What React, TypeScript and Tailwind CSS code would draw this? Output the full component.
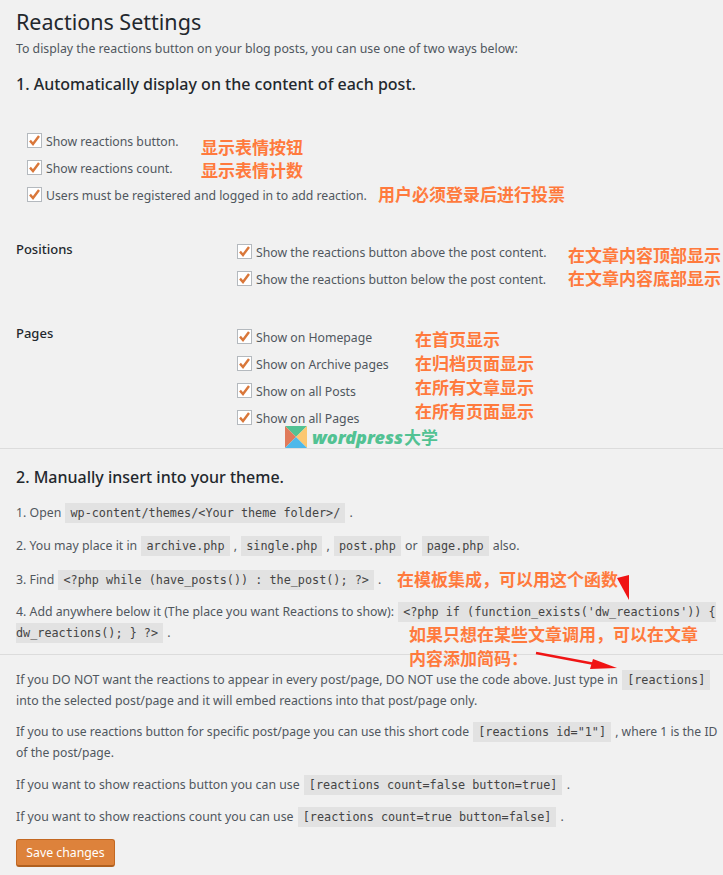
const SANS = "font-['Noto_Sans','Noto_Sans_CJK_SC',sans-serif]";

function CheckRow({ label }: { label: string }) {
  return (
    <label className="flex items-center h-[27px] text-[12.25px] text-[#50575e]">
      <span className="w-[15px] h-[15px] mr-1 border border-[#b4b9be] bg-white flex items-center justify-center shrink-0">
        <svg width="13" height="13" viewBox="0 0 13 13">
          <path d="M2 6.6 L5 10 L11 2" fill="none" stroke="#d9773a" strokeWidth="2.4" />
        </svg>
      </span>
      <span className="pt-[3px]">{label}</span>
    </label>
  );
}

function Code({ children }: { children: React.ReactNode }) {
  return (
    <code className="bg-[#e2e2e2] px-[5px] py-[3px] mx-[1px] font-['DejaVu_Sans_Mono',monospace] text-[11.8px] leading-none text-[#444]">
      {children}
    </code>
  );
}

function Note({ className, children }: { className: string; children: React.ReactNode }) {
  return (
    <div className={`absolute font-['Noto_Sans_CJK_SC',sans-serif] font-bold text-[#ff7a3d] text-[17px] leading-[24px] whitespace-nowrap ${className}`}>
      {children}
    </div>
  );
}

export default function App() {
  return (
    <div className={`relative w-[723px] h-[875px] overflow-hidden bg-[#f1f1f1] ${SANS}`}>
      <div className="pl-4 pr-[2px] text-[12.3px] text-[#50575e]">
        <h1 className="pt-[7px] text-[21.5px] leading-[30px] text-[#23282d]">Reactions Settings</h1>
        <p className="mt-[3px] leading-[18px]">To display the reactions button on your blog posts, you can use one of two ways below:</p>
        <h2 className="mt-[14px] text-[16px] leading-[24px] font-medium text-[#23282d]">1. Automatically display on the content of each post.</h2>

        <div className="mt-[31px] pl-[11px]">
          <CheckRow label="Show reactions button." />
          <CheckRow label="Show reactions count." />
          <CheckRow label="Users must be registered and logged in to add reaction." />
        </div>

        <div className="mt-[30px] flex">
          <div className="w-[221px] pt-[2px] text-[13px] font-medium text-[#23282d] leading-[18px]">Positions</div>
          <div>
            <CheckRow label="Show the reactions button above the post content." />
            <CheckRow label="Show the reactions button below the post content." />
          </div>
        </div>

        <div className="mt-[31px] flex">
          <div className="w-[221px] pt-[1px] text-[13px] font-medium text-[#23282d] leading-[18px]">Pages</div>
          <div>
            <CheckRow label="Show on Homepage" />
            <CheckRow label="Show on Archive pages" />
            <CheckRow label="Show on all Posts" />
            <CheckRow label="Show on all Pages" />
          </div>
        </div>
      </div>

      <hr className="mt-[17px] border-t border-[#dcdcdc]" />

      <div className="pl-4 pr-[2px] text-[12.3px] text-[#50575e]">
        <h2 className="mt-[16px] text-[16px] leading-[24px] font-medium text-[#23282d]">2. Manually insert into your theme.</h2>
        <p className="mt-[13px] leading-[21px]">1. Open <Code>wp-content/themes/&lt;Your theme folder&gt;/</Code> .</p>
        <p className="mt-3 leading-[21px]">2. You may place it in <Code>archive.php</Code> , <Code>single.php</Code> , <Code>post.php</Code> or <Code>page.php</Code> also.</p>
        <p className="mt-[13px] leading-[21px]">3. Find <Code>&lt;?php while (have_posts()) : the_post(); ?&gt;</Code> .</p>
        <p className="mt-[11px] leading-[21px]">4. Add anywhere below it (The place you want Reactions to show): <Code>&lt;?php if (function_exists('dw_reactions')) {'{'} dw_reactions(); {'}'} ?&gt;</Code> .</p>
      </div>

      <hr className="mt-[11px] border-t border-[#dcdcdc]" />

      <div className="pl-4 pr-[2px] text-[12.3px] text-[#50575e]">
        <p className="mt-[14px] leading-[21px]">If you DO NOT want the reactions to appear in every post/page, DO NOT use the code above. Just type in <Code>[reactions]</Code> into the selected post/page and it will embed reactions into that post/page only.</p>
        <p className="mt-[10px] leading-[21px] text-[12.15px]">If you to use reactions button for specific post/page you can use this short code <Code>[reactions id="1"]</Code> , where 1 is the ID of the post/page.</p>
        <p className="mt-[11px] leading-[21px]">If you want to show reactions button you can use <Code>[reactions count=false button=true]</Code> .</p>
        <p className="mt-[11px] leading-[21px]">If you want to show reactions count you can use <Code>[reactions count=true button=false]</Code> .</p>
        <button className="mt-3 w-[99px] h-[28px] pt-[2px] rounded-[3px] bg-[#dd823b] border border-[#c36822] border-b-2 border-b-[#b0601f] text-white text-[12.3px]">Save changes</button>
      </div>

      <Note className="left-[201px] top-[135px]">显示表情按钮</Note>
      <Note className="left-[201px] top-[158px]">显示表情计数</Note>
      <Note className="left-[378px] top-[182px]">用户必须登录后进行投票</Note>
      <Note className="left-[568px] top-[243px]">在文章内容顶部显示</Note>
      <Note className="left-[568px] top-[266px]">在文章内容底部显示</Note>
      <Note className="left-[415px] top-[327px]">在首页显示</Note>
      <Note className="left-[415px] top-[351px]">在归档页面显示</Note>
      <Note className="left-[415px] top-[375px]">在所有文章显示</Note>
      <Note className="left-[415px] top-[399px]">在所有页面显示</Note>
      <Note className="left-[397px] top-[567px]">在模板集成，可以用这个函数</Note>
      <Note className="left-[409px] top-[622px]">如果只想在某些文章调用，可以在文章</Note>
      <Note className="left-[409px] top-[646px]">内容添加简码：</Note>

      {/* watermark */}
      <div className="absolute left-[285px] top-[426px] flex items-center">
        <svg width="22" height="22" viewBox="0 0 22 22">
          <polygon points="0,0 22,0 11,11" fill="#52c293" />
          <polygon points="0,0 11,11 0,22" fill="#e07a5a" />
          <polygon points="22,0 22,22 11,11" fill="#fcc771" />
          <polygon points="0,22 22,22 11,11" fill="#4db8ea" />
        </svg>
        <span className="ml-[5px] text-[#52c293] font-['Noto_Sans',sans-serif] italic font-black text-[18px] leading-[22px]">wordpress</span>
        <span className="ml-[1px] font-['Noto_Sans_CJK_SC',sans-serif] font-bold text-[#52c293] text-[17px] leading-[22px]">大学</span>
      </div>

      {/* red arrows */}
      <svg className="absolute left-0 top-0 pointer-events-none" width="723" height="875">
        <polygon points="617,578 629,575 629,600" fill="#f01414" />
        <path d="M536 653 L600 665" stroke="#f01414" strokeWidth="2.5" />
        <polygon points="593,659 617,668 590,669" fill="#f01414" />
      </svg>
    </div>
  );
}
